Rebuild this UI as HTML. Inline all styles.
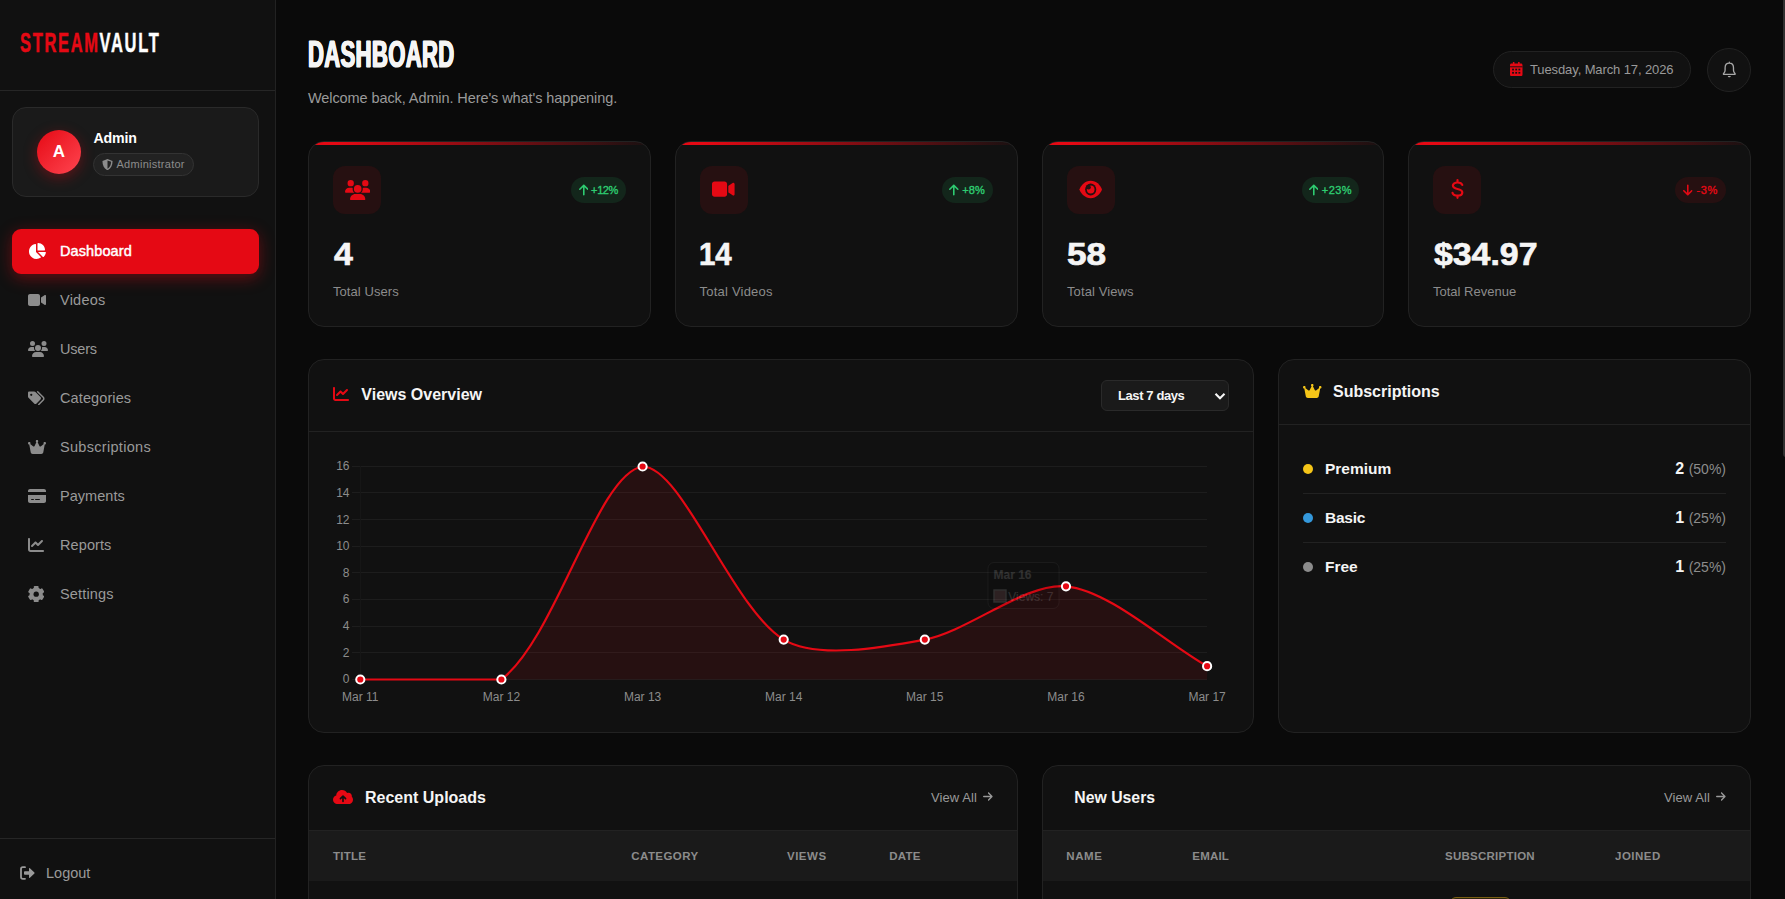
<!DOCTYPE html>
<html lang="en">
<head>
<meta charset="utf-8">
<title>StreamVault Admin - Dashboard</title>
<style>
*{box-sizing:border-box;margin:0;padding:0}
html,body{width:1785px;height:899px;overflow:hidden;background:#0a0a0a;color:#f5f5f5;font-family:"Liberation Sans",Arial,sans-serif;}
body{position:relative}
svg{display:block}
.abs{position:absolute}
/* ---------- sidebar ---------- */
#sidebar{position:absolute;left:0;top:0;width:276px;height:899px;background:#111111;border-right:1px solid #222222}
#logo{position:absolute;left:20px;top:25.5px;height:32px;line-height:32px;font-weight:700;font-size:28.5px;white-space:nowrap;transform-origin:0 50%;transform:scaleX(.578);letter-spacing:2.9px;color:#fff;-webkit-text-stroke:.5px #fff}
#logo b{color:#e50914;font-weight:700;-webkit-text-stroke:.5px #e50914}
.hdiv{position:absolute;left:0;width:275px;height:1px;background:#262626}
#usercard{position:absolute;left:12px;top:107px;width:247px;height:90px;border-radius:14px;background:#1a1a1a;border:1px solid #2a2a2a}
#avatar{position:absolute;left:24px;top:22px;width:44px;height:44px;border-radius:50%;background:linear-gradient(135deg,#e50914,#ff4550);box-shadow:0 4px 14px rgba(229,9,20,.35);color:#fff;font-weight:700;font-size:17px;line-height:44px;text-align:center}
#uname{position:absolute;left:80.5px;top:21px;font-weight:700;font-size:14.2px;line-height:18px;color:#fff;letter-spacing:-.2px}
#urole{position:absolute;left:80px;top:45px;width:101px;height:23px;border-radius:12px;background:#222;border:1px solid #333;color:#8c8c8c;font-size:11px;line-height:21px;padding-left:22.5px;white-space:nowrap;letter-spacing:.27px}
#urole svg{position:absolute;left:8px;top:4.5px}
.nav{position:absolute;left:12px;width:247px;height:45px;border-radius:9px;color:#9a9a9a;font-size:14.5px;line-height:45px;padding-left:48px;white-space:nowrap}
.nav svg{position:absolute}
.nav.on{background:#e50914;color:#fff;font-weight:400;-webkit-text-stroke:.45px #fff;box-shadow:0 4px 16px rgba(229,9,20,.4);font-size:14.500px;letter-spacing:.1px}
#logout{position:absolute;left:46px;top:864px;font-size:14.5px;line-height:18px;color:#9a9a9a}
/* ---------- main header ---------- */
#title{position:absolute;left:308px;top:34.7px;height:38px;line-height:38px;font-weight:700;font-size:37.5px;white-space:nowrap;transform-origin:0 50%;transform:scaleX(.588);color:#f5f5f5;letter-spacing:.6px;-webkit-text-stroke:1.1px #f5f5f5;text-shadow:.9px 0 0 #f5f5f5,-.9px 0 0 #f5f5f5}
#sub{position:absolute;left:308px;top:89px;font-size:14.5px;line-height:18px;color:#9a9a9a;white-space:nowrap;letter-spacing:-.09px}
#date{position:absolute;left:1493px;top:51px;width:198px;height:37px;border-radius:19px;background:#111;border:1px solid #222;color:#9a9a9a;font-size:13px;line-height:35px;padding-left:36px;white-space:nowrap;letter-spacing:-.11px}
#date svg{position:absolute;left:16.400px;top:10px}
#bell{position:absolute;left:1707px;top:48px;width:44px;height:44px;border-radius:50%;background:#111;border:1px solid #222}
#bell svg{position:absolute;left:14.200px;top:12.400px}
/* ---------- cards ---------- */
.card{position:absolute;background:#111111;border:1px solid #222222;border-radius:16px;overflow:hidden}
.stat{top:141px;width:343px;height:186px}
.stat:before{content:"";position:absolute;left:0;top:0;right:0;height:3px;background:linear-gradient(90deg,#e50914 0%,#e50914 8%,rgba(229,9,20,.03) 100%)}
.sicon{position:absolute;left:24px;top:24px;width:48px;height:48px;border-radius:12px;background:#261011}
.sicon svg{position:absolute}
.chg{position:absolute;top:35px;right:24px;height:26px;border-radius:13px;font-size:11px;font-weight:400;-webkit-text-stroke:.35px;line-height:26px;padding:0 8px 0 19.900px;white-space:nowrap}
.chg.up{background:#13261b;color:#2ecc71}
.chg.dn{background:#261011;color:#e50914}
.chg svg{position:absolute;left:7.400px;top:7px}
.sval{position:absolute;left:24px;top:93px;font-size:32px;line-height:38px;font-weight:700;color:#f5f5f5;white-space:nowrap;transform-origin:0 50%;-webkit-text-stroke:.7px #f5f5f5}
.slab{position:absolute;left:24px;top:142px;font-size:13px;line-height:16px;color:#8c8c8c;white-space:nowrap}
.ctitle{position:absolute;font-weight:700;font-size:16px;line-height:20px;color:#f5f5f5;white-space:nowrap}
.cline{position:absolute;left:0;right:0;height:1px;background:#222}
.viewall{position:absolute;font-size:13px;line-height:16px;color:#9a9a9a;white-space:nowrap;letter-spacing:.1px}
.thead{position:absolute;left:0;right:0;top:65px;height:50px;background:#1a1a1a}
.th{position:absolute;top:18px;font-size:11.5px;line-height:14px;font-weight:700;color:#8c8c8c;letter-spacing:.5px;white-space:nowrap}
.srow{position:absolute;left:24px;right:24px;height:49px}
.srow .dot{position:absolute;left:0;top:19px;width:10px;height:10px;border-radius:50%}
.srow .nm{position:absolute;left:22px;top:13.500px;font-size:15.500px;line-height:20px;font-weight:700;color:#f5f5f5}
.srow .ct{position:absolute;right:0;top:13.500px;font-size:16px;line-height:20px;font-weight:700;color:#f5f5f5;white-space:nowrap}
.srow .ct i{font-style:normal;font-weight:400;font-size:14px;color:#8c8c8c}
.srow.bb{border-bottom:1px solid #222}
#sel{position:absolute;left:792px;top:20px;width:128px;height:31px;border-radius:6px;background:#1a1a1a;border:1px solid #2a2a2a;color:#f5f5f5;font-weight:700;font-size:13px;line-height:29px;padding-left:16px;white-space:nowrap;letter-spacing:-.4px}
#sel svg{position:absolute;right:2.500px;top:9.500px}
#scroll{position:absolute;left:1782.700px;top:0;width:3px;height:457px;background:#303030;border-radius:0 0 0 3px}
</style>
</head>
<body>
<!-- SIDEBAR -->
<div id="sidebar">
  <div id="logo"><b>STREAM</b>VAULT</div>
  <div class="hdiv" style="top:90px"></div>
  <div id="usercard">
    <div id="avatar">A</div>
    <div id="uname">Admin</div>
    <div id="urole"><svg width="11" height="11.500" viewBox="0 0 10 11" preserveAspectRatio="none"><path d="M5 0L9.6 1.8C9.6 6.2 8 9.2 5 10.8C2 9.2.4 6.200.4 1.800Z" fill="#8c8c8c"/><path d="M5 1.500V9.300C7.100 8 8.200 5.800 8.300 2.700Z" fill="#222"/></svg>Administrator</div>
  </div>
  <div class="nav on" style="top:229px"><svg style="left:16px;top:14px" width="18" height="16" viewBox="0 0 576 512"><path d="M304 240V16.600c0-9 7-16.600 16-16.600C443.700 0 544 100.300 544 224c0 9-7.600 16-16.600 16H304zM32 272C32 150.700 122.100 50.300 239 34.300c9.200-1.300 17 6.100 17 15.400V288L412.500 444.500c6.700 6.700 6.200 17.700-1.500 23.100C371.800 495.600 323.800 512 272 512C139.500 512 32 404.600 32 272zm526.400 16c9.300 0 16.600 7.800 15.400 17c-7.700 55.900-34.600 105.600-73.900 142.300c-6 5.600-15.400 5.200-21.200-.7L320 288H558.400z" fill="#fff"/></svg>Dashboard</div>
  <div class="nav" style="top:278px;letter-spacing:0.23px"><svg style="left:16px;top:14px" width="18" height="16" viewBox="0 0 576 512"><path d="M0 128C0 92.700 28.700 64 64 64H320c35.300 0 64 28.700 64 64V384c0 35.300-28.700 64-64 64H64c-35.300 0-64-28.700-64-64V128zM559.100 99.800c10.400 5.600 16.900 16.400 16.900 28.200V384c0 11.800-6.500 22.600-16.900 28.200s-23 5-32.900-1.600l-96-64L416 337.100V320 192 174.900l14.200-9.500 96-64c9.800-6.500 22.400-7.200 32.900-1.600z" fill="#8c8c8c"/></svg>Videos</div>
  <div class="nav" style="top:327px;letter-spacing:-0.22px"><svg style="left:16px;top:14px" width="20" height="16" viewBox="0 0 640 512"><path d="M144 0a80 80 0 1 1 0 160A80 80 0 1 1 144 0zM512 0a80 80 0 1 1 0 160A80 80 0 1 1 512 0zM0 298.700C0 239.800 47.800 192 106.700 192h42.700c15.900 0 31 3.500 44.600 9.700c-1.300 7.200-1.900 14.700-1.900 22.300c0 38.200 16.800 72.500 43.300 96c-.2 0-.4 0-.7 0H21.300C9.600 320 0 310.400 0 298.700zM405.300 320c-.2 0-.4 0-.7 0c26.600-23.500 43.300-57.800 43.300-96c0-7.600-.7-15-1.900-22.300c13.600-6.300 28.700-9.700 44.600-9.700h42.700C592.200 192 640 239.800 640 298.700c0 11.800-9.600 21.300-21.300 21.300H405.300zM224 224a96 96 0 1 1 192 0 96 96 0 1 1 -192 0zM128 485.300C128 411.700 187.700 352 261.300 352H378.700C452.300 352 512 411.700 512 485.300c0 14.700-11.900 26.700-26.700 26.700H154.700c-14.700 0-26.700-11.900-26.700-26.700z" fill="#8c8c8c"/></svg>Users</div>
  <div class="nav" style="top:376px;letter-spacing:0.11px"><svg style="left:16px;top:14.700px" width="16.600" height="14.400" viewBox="0 0.300 19.400 17" preserveAspectRatio="none"><path d="M0 2.500C0 1.600.7 1 1.500 1H7.200C7.800 1 8.300 1.200 8.700 1.600L14.600 7.500C15.400 8.300 15.400 9.500 14.600 10.300L10 15C9.200 15.800 8 15.800 7.200 15L.6 8.400C.2 8 0 7.500 0 6.900Z" fill="#8c8c8c"/><circle cx="3.800" cy="4.800" r="1.300" fill="#111"/><path d="M11.300 1.300L17.800 7.800C18.700 8.700 18.700 10 17.800 10.900L12.600 16.200" stroke="#8c8c8c" stroke-width="1.700" fill="none" stroke-linecap="round"/></svg>Categories</div>
  <div class="nav" style="top:425px;letter-spacing:0.3px"><svg style="left:16px;top:14px" width="18" height="16" viewBox="0 0 576 512"><path d="M309 106c11.400-7 19-19.700 19-34c0-22.100-17.900-40-40-40s-40 17.900-40 40c0 14.400 7.600 27 19 34L209.700 220.600c-9.100 18.200-32.700 23.400-48.600 10.700L72 160c5-6.700 8-15 8-24c0-22.100-17.900-40-40-40S0 113.900 0 136s17.900 40 40 40c.2 0 .5 0 .7 0L86.400 427.400c5.500 30.400 32 52.600 63 52.600H426.600c30.900 0 57.400-22.100 63-52.600L535.300 176c.2 0 .5 0 .7 0c22.100 0 40-17.900 40-40s-17.900-40-40-40s-40 17.900-40 40c0 9 3 17.300 8 24l-89.100 71.300c-15.900 12.700-39.500 7.500-48.600-10.700L309 106z" fill="#8c8c8c"/></svg>Subscriptions</div>
  <div class="nav" style="top:474px;letter-spacing:0.04px"><svg style="left:16px;top:14px" width="18" height="16" viewBox="0 0 576 512"><path d="M64 32C28.700 32 0 60.700 0 96v32H576V96c0-35.300-28.700-64-64-64H64zM576 224H0V416c0 35.300 28.700 64 64 64H512c35.300 0 64-28.700 64-64V224zM112 352h64c8.800 0 16 7.200 16 16s-7.200 16-16 16H112c-8.800 0-16-7.200-16-16s7.200-16 16-16zm112 16c0-8.800 7.200-16 16-16H368c8.800 0 16 7.200 16 16s-7.200 16-16 16H240c-8.800 0-16-7.200-16-16z" fill="#8c8c8c"/></svg>Payments</div>
  <div class="nav" style="top:523px;letter-spacing:0.1px"><svg style="left:16px;top:14px" width="16" height="16" viewBox="0 0 512 512"><path d="M64 64c0-17.700-14.300-32-32-32S0 46.300 0 64V400c0 44.200 35.800 80 80 80H480c17.700 0 32-14.300 32-32s-14.300-32-32-32H80c-8.800 0-16-7.200-16-16V64zm406.600 86.600c12.500-12.500 12.500-32.800 0-45.300s-32.800-12.500-45.300 0L320 210.700l-57.400-57.400c-12.500-12.500-32.800-12.500-45.300 0l-112 112c-12.500 12.500-12.500 32.800 0 45.300s32.800 12.500 45.300 0L240 221.300l57.400 57.400c12.500 12.500 32.800 12.500 45.300 0l128-128z" fill="#8c8c8c"/></svg>Reports</div>
  <div class="nav" style="top:572px;letter-spacing:0.17px"><svg style="left:16px;top:13.800px" width="16.400" height="16.400" viewBox="0.400 0.400 17.200 17.200"><g transform="translate(9 9)"><g fill="#8c8c8c"><circle r="6.900"/><rect x="-2.500" y="-8.600" width="5" height="17.200" rx=".9"/><rect x="-2.500" y="-8.600" width="5" height="17.200" rx=".9" transform="rotate(60)"/><rect x="-2.500" y="-8.600" width="5" height="17.200" rx=".9" transform="rotate(120)"/></g><circle r="2.800" fill="#111"/></g></svg>Settings</div>
  <div class="hdiv" style="top:838px"></div>
  <svg class="abs" style="left:20px;top:866px" width="15" height="14" viewBox="0 0 15 14"><path d="M5 1.200H2.800C1.800 1.200 1 2 1 3V11C1 12 1.800 12.800 2.800 12.800H5" stroke="#9a9a9a" stroke-width="1.800" fill="none" stroke-linecap="round"/><path d="M4.800 5.300H9V2.600C9 2.100 9.500 1.900 9.900 2.200L14.400 6.400C14.700 6.700 14.700 7.300 14.400 7.600L9.900 11.800C9.500 12.100 9 11.900 9 11.400V8.700H4.800C4.400 8.700 4 8.300 4 7.900V6.100C4 5.700 4.400 5.300 4.800 5.300Z" fill="#9a9a9a"/></svg>
  <div id="logout">Logout</div>
</div>

<!-- HEADER -->
<div id="title">DASHBOARD</div>
<div id="sub">Welcome back, Admin. Here's what's happening.</div>
<div id="date"><svg width="12.500" height="14.200" viewBox="0 0 13 14" preserveAspectRatio="none"><path d="M3 0H4.600V1.600H8.400V0H10V1.600H11.500C12.300 1.600 13 2.300 13 3.100V12.500C13 13.300 12.300 14 11.500 14H1.500C.7 14 0 13.300 0 12.500V3.100C0 2.300.7 1.600 1.500 1.600H3Z" fill="#e50914"/><g fill="#111"><rect x="0" y="4.300" width="13" height=".9"/><rect x="2.200" y="6.600" width="1.900" height="1.700"/><rect x="5.500" y="6.600" width="1.900" height="1.700"/><rect x="8.800" y="6.600" width="1.900" height="1.700"/><rect x="2.200" y="9.800" width="1.900" height="1.700"/><rect x="5.500" y="9.800" width="1.900" height="1.700"/><rect x="8.800" y="9.800" width="1.900" height="1.700"/></g></svg>Tuesday, March 17, 2026</div>
<div id="bell"><svg width="14.600" height="17.400" viewBox="0 0 16 18" preserveAspectRatio="none"><path d="M8 1.200V2.200M8 2.200C5.200 2.200 3.400 4.300 3.400 7V9.500C3.400 11 2.700 12.200 1.600 13.200V13.800H14.400V13.200C13.300 12.200 12.600 11 12.600 9.500V7C12.600 4.300 10.800 2.200 8 2.200Z" stroke="#a8a8a8" stroke-width="1.450" fill="none" stroke-linejoin="round" stroke-linecap="round"/><path d="M6.300 15.400C6.500 16.300 7.200 16.800 8 16.800C8.800 16.800 9.500 16.300 9.700 15.400Z" fill="#a8a8a8"/></svg></div>

<!-- STAT CARDS -->
<div class="card stat" style="left:308px">
  <div class="sicon"><svg style="left:11.500px;top:13.800px" width="25.400" height="20.400" viewBox="0 0 640 512" preserveAspectRatio="none"><path d="M144 0a80 80 0 1 1 0 160A80 80 0 1 1 144 0zM512 0a80 80 0 1 1 0 160A80 80 0 1 1 512 0zM0 298.700C0 239.800 47.800 192 106.700 192h42.700c15.900 0 31 3.500 44.600 9.700c-1.300 7.200-1.900 14.700-1.900 22.300c0 38.200 16.800 72.500 43.300 96c-.2 0-.4 0-.7 0H21.300C9.600 320 0 310.400 0 298.700zM405.300 320c-.2 0-.4 0-.7 0c26.600-23.500 43.300-57.800 43.300-96c0-7.600-.7-15-1.900-22.300c13.600-6.300 28.700-9.700 44.600-9.700h42.700C592.200 192 640 239.800 640 298.700c0 11.800-9.600 21.300-21.300 21.300H405.300zM224 224a96 96 0 1 1 192 0 96 96 0 1 1 -192 0zM128 485.300C128 411.700 187.700 352 261.300 352H378.700C452.300 352 512 411.700 512 485.300c0 14.700-11.900 26.700-26.700 26.700H154.700c-14.700 0-26.700-11.900-26.700-26.700z" fill="#e50914"/></svg></div>
  <div class="chg up"><svg width="9.600" height="12" viewBox="0 10 384 492" preserveAspectRatio="none"><path d="M214.600 41.400c-12.500-12.500-32.800-12.500-45.300 0l-160 160c-12.500 12.500-12.500 32.800 0 45.300s32.800 12.500 45.300 0L160 141.300V448c0 17.700 14.300 32 32 32s32-14.300 32-32V141.300L329.400 246.600c12.500 12.500 32.800 12.500 45.300 0s12.500-32.800 0-45.300l-160-160z" fill="#2ecc71"/></svg><span style="letter-spacing:-.39px">+12%</span></div>
  <div class="sval" style="transform:scaleX(1.06);left:25px">4</div>
  <div class="slab" style="letter-spacing:.07px">Total Users</div>
</div>
<div class="card stat" style="left:675px">
  <div class="sicon"><svg style="left:12.200px;top:13px" width="22.600" height="20.400" viewBox="0 0 576 512" preserveAspectRatio="none"><path d="M0 128C0 92.700 28.700 64 64 64H320c35.300 0 64 28.700 64 64V384c0 35.300-28.700 64-64 64H64c-35.300 0-64-28.700-64-64V128zM559.100 99.800c10.400 5.600 16.900 16.400 16.900 28.200V384c0 11.800-6.500 22.600-16.900 28.200s-23 5-32.900-1.600l-96-64L416 337.100V320 192 174.900l14.200-9.500 96-64c9.800-6.500 22.400-7.200 32.900-1.600z" fill="#e50914"/></svg></div>
  <div class="chg up" style="padding-left:20.8px;padding-right:8px"><svg style="left:7.8px" width="9.600" height="12" viewBox="0 10 384 492" preserveAspectRatio="none"><path d="M214.600 41.400c-12.500-12.500-32.800-12.500-45.300 0l-160 160c-12.500 12.500-12.500 32.800 0 45.300s32.800 12.500 45.300 0L160 141.300V448c0 17.700 14.300 32 32 32s32-14.300 32-32V141.300L329.400 246.600c12.500 12.500 32.800 12.500 45.300 0s12.500-32.800 0-45.300l-160-160z" fill="#2ecc71"/></svg><span style="letter-spacing:.12px">+8%</span></div>
  <div class="sval" style="transform:scaleX(.92);left:23px">14</div>
  <div class="slab" style="letter-spacing:.22px;left:23.500px">Total Videos</div>
</div>
<div class="card stat" style="left:1042px;width:342px">
  <div class="sicon"><svg style="left:11.500px;top:14.200px" width="23.400" height="19" viewBox="0 0 24 18" preserveAspectRatio="none"><path d="M12 .8C6.300 .8 2.200 4.700.4 9C2.200 13.300 6.300 17.200 12 17.200C17.700 17.200 21.800 13.300 23.600 9C21.800 4.700 17.700 .8 12 .8Z" fill="#e50914"/><circle cx="12" cy="9" r="5.700" fill="#261011"/><circle cx="12" cy="9" r="3.900" fill="#e50914"/><circle cx="9.800" cy="6.800" r="2.300" fill="#261011"/></svg></div>
  <div class="chg up" style="padding-left:20.3px;padding-right:7.2px"><svg style="left:7.1px" width="9.600" height="12" viewBox="0 10 384 492" preserveAspectRatio="none"><path d="M214.600 41.400c-12.500-12.500-32.800-12.500-45.300 0l-160 160c-12.500 12.500-12.500 32.800 0 45.300s32.800 12.500 45.300 0L160 141.300V448c0 17.700 14.300 32 32 32s32-14.300 32-32V141.300L329.400 246.600c12.500 12.500 32.800 12.500 45.300 0s12.500-32.800 0-45.300l-160-160z" fill="#2ecc71"/></svg><span style="letter-spacing:.39px">+23%</span></div>
  <div class="sval" style="transform:scaleX(1.1)">58</div>
  <div class="slab" style="letter-spacing:.1px">Total Views</div>
</div>
<div class="card stat" style="left:1408px">
  <div class="sicon"><svg style="left:17.500px;top:13.300px" width="13" height="20" viewBox="0 0 13 21" preserveAspectRatio="none"><path d="M11.300 6.300C10.800 4.500 9 3.600 6.500 3.600C3.800 3.600 1.900 4.900 1.900 6.900C1.900 9.100 3.700 9.800 6.500 10.400C9.500 11.100 11.300 11.900 11.300 14.100C11.300 16.200 9.300 17.400 6.500 17.400C3.700 17.400 1.900 16.300 1.500 14.400M6.500 1.200V3.600M6.500 17.400V19.800" stroke="#e50914" stroke-width="2.200" fill="none" stroke-linecap="round"/></svg></div>
  <div class="chg dn" style="padding-left:21.100px"><svg width="9.600" height="12" viewBox="0 10 384 492" preserveAspectRatio="none" style="transform:rotate(180deg);left:7.600px"><path d="M214.600 41.400c-12.500-12.500-32.800-12.500-45.300 0l-160 160c-12.500 12.500-12.500 32.800 0 45.300s32.800 12.500 45.300 0L160 141.300V448c0 17.700 14.300 32 32 32s32-14.300 32-32V141.300L329.400 246.600c12.500 12.500 32.800 12.500 45.300 0s12.500-32.800 0-45.300l-160-160z" fill="#e50914"/></svg><span style="letter-spacing:.68px">-3%</span></div>
  <div class="sval" style="transform:scaleX(1.057);left:24.500px">$34.97</div>
  <div class="slab">Total Revenue</div>
</div>

<!-- CHART CARD -->
<div class="card" id="chartcard" style="left:308px;top:359px;width:946px;height:374px">
  <svg class="abs" style="left:24px;top:25.800px" width="16" height="16" viewBox="0 0 512 512"><path d="M64 64c0-17.700-14.300-32-32-32S0 46.300 0 64V400c0 44.200 35.800 80 80 80H480c17.700 0 32-14.300 32-32s-14.300-32-32-32H80c-8.800 0-16-7.200-16-16V64zm406.600 86.600c12.500-12.500 12.500-32.800 0-45.300s-32.800-12.500-45.300 0L320 210.700l-57.400-57.400c-12.500-12.500-32.800-12.500-45.300 0l-112 112c-12.500 12.500-12.500 32.800 0 45.300s32.800 12.500 45.300 0L240 221.300l57.400 57.400c12.500 12.500 32.800 12.500 45.300 0l128-128z" fill="#e50914"/></svg>
  <div class="ctitle" style="left:52.300px;top:25px">Views Overview</div>
  <div id="sel">Last 7 days<svg width="12" height="10" viewBox="0 0 12 10"><path d="M1.500 2.800L6 7.300L10.500 2.800" stroke="#f5f5f5" stroke-width="2.100" fill="none"/></svg></div>
  <div class="cline" style="top:71px"></div>
  <svg class="abs" id="chart" style="left:0;top:0" width="944" height="372" viewBox="309 360 944 372" font-family="Liberation Sans, Arial, sans-serif">
    <path d="M352 679.5H1207.1" stroke="#1d1d1d" stroke-width="1"/>
    <path d="M352 652.5H1207.1" stroke="#1d1d1d" stroke-width="1"/>
    <path d="M352 626.5H1207.1" stroke="#1d1d1d" stroke-width="1"/>
    <path d="M352 599.5H1207.1" stroke="#1d1d1d" stroke-width="1"/>
    <path d="M352 572.5H1207.1" stroke="#1d1d1d" stroke-width="1"/>
    <path d="M352 546.5H1207.1" stroke="#1d1d1d" stroke-width="1"/>
    <path d="M352 519.5H1207.1" stroke="#1d1d1d" stroke-width="1"/>
    <path d="M352 492.5H1207.1" stroke="#1d1d1d" stroke-width="1"/>
    <path d="M352 466.5H1207.1" stroke="#1d1d1d" stroke-width="1"/>
    <path d="M360.5 466V679" stroke="#161616" stroke-width="1"/>
    <path d="M360.3 679.5 C402.6 679.5 471.3 679.5 501.4 679.5 C556.0 638.3 597.4 472.9 642.6 466.5 C682.1 466.5 731.8 607.7 783.7 639.6 C816.5 659.7 883.9 647.3 924.8 639.6 C968.6 631.3 1025.1 582.5 1066.0 586.3 C1109.8 590.5 1164.7 642.2 1207.1 666.2 L1207.1 679.5 L360.3 679.5 Z" fill="rgba(229,9,20,0.1)"/>
    <path d="M360.3 679.5 C402.6 679.5 471.3 679.5 501.4 679.5 C556.0 638.3 597.4 472.9 642.6 466.5 C682.1 466.5 731.8 607.7 783.7 639.6 C816.5 659.7 883.9 647.3 924.8 639.6 C968.6 631.3 1025.1 582.5 1066.0 586.3 C1109.8 590.5 1164.7 642.2 1207.1 666.2" fill="none" stroke="#e50914" stroke-width="2.2"/>
    <circle cx="360.3" cy="679.5" r="4.100" fill="#e50914" stroke="#fff" stroke-width="2"/>
    <circle cx="501.4" cy="679.5" r="4.100" fill="#e50914" stroke="#fff" stroke-width="2"/>
    <circle cx="642.6" cy="466.5" r="4.100" fill="#e50914" stroke="#fff" stroke-width="2"/>
    <circle cx="783.7" cy="639.6" r="4.100" fill="#e50914" stroke="#fff" stroke-width="2"/>
    <circle cx="924.8" cy="639.6" r="4.100" fill="#e50914" stroke="#fff" stroke-width="2"/>
    <circle cx="1066.0" cy="586.3" r="4.100" fill="#e50914" stroke="#fff" stroke-width="2"/>
    <circle cx="1207.1" cy="666.2" r="4.100" fill="#e50914" stroke="#fff" stroke-width="2"/>
    <g fill="#8c8c8c" font-size="12" text-anchor="end">
    <text x="349.500" y="683.3">0</text>
    <text x="349.500" y="656.7">2</text>
    <text x="349.500" y="630.0">4</text>
    <text x="349.500" y="603.4">6</text>
    <text x="349.500" y="576.8">8</text>
    <text x="349.500" y="550.2">10</text>
    <text x="349.500" y="523.5">12</text>
    <text x="349.500" y="496.9">14</text>
    <text x="349.500" y="470.3">16</text>
    </g>
    <g fill="#8c8c8c" font-size="12" text-anchor="middle">
    <text x="360.3" y="701">Mar 11</text>
    <text x="501.4" y="701">Mar 12</text>
    <text x="642.6" y="701">Mar 13</text>
    <text x="783.7" y="701">Mar 14</text>
    <text x="924.8" y="701">Mar 15</text>
    <text x="1066.0" y="701">Mar 16</text>
    <text x="1207.1" y="701">Mar 17</text>
    </g>
    <g opacity=".125"><rect x="988" y="562.500" width="71" height="46" rx="6" fill="#000" fill-opacity=".8" stroke="#fff" stroke-opacity=".35"/><text x="993.500" y="579" font-size="12" font-weight="700" fill="#fff">Mar 16</text><rect x="994" y="590" width="12" height="12" fill="#f08f95" stroke="#fff" stroke-width="1.400"/><text x="1008.300" y="600.500" font-size="12" fill="#fff">Views: 7</text></g>
  </svg>
</div>

<!-- SUBSCRIPTIONS CARD -->
<div class="card" style="left:1278px;top:359px;width:473px;height:374px">
  <svg class="abs" style="left:24px;top:23.200px" width="18.500" height="16" viewBox="0 0 576 512" preserveAspectRatio="none"><path d="M309 106c11.400-7 19-19.700 19-34c0-22.100-17.900-40-40-40s-40 17.900-40 40c0 14.400 7.600 27 19 34L209.700 220.600c-9.100 18.200-32.700 23.400-48.600 10.700L72 160c5-6.700 8-15 8-24c0-22.100-17.900-40-40-40S0 113.900 0 136s17.900 40 40 40c.2 0 .5 0 .7 0L86.400 427.400c5.500 30.400 32 52.600 63 52.600H426.600c30.900 0 57.400-22.100 63-52.600L535.300 176c.2 0 .5 0 .7 0c22.100 0 40-17.900 40-40s-17.900-40-40-40s-40 17.900-40 40c0 9 3 17.300 8 24l-89.100 71.300c-15.900 12.700-39.500 7.500-48.600-10.700L309 106z" fill="#f5c518"/></svg>
  <div class="ctitle" style="left:54px;top:22px">Subscriptions</div>
  <div class="cline" style="top:64px"></div>
  <div class="srow bb" style="top:85px"><span class="dot" style="background:#f5c518"></span><span class="nm">Premium</span><span class="ct">2 <i>(50%)</i></span></div>
  <div class="srow bb" style="top:134px"><span class="dot" style="background:#3498db"></span><span class="nm" style="letter-spacing:-.25px">Basic</span><span class="ct">1 <i>(25%)</i></span></div>
  <div class="srow" style="top:183px"><span class="dot" style="background:#8c8c8c"></span><span class="nm">Free</span><span class="ct">1 <i>(25%)</i></span></div>
</div>

<!-- RECENT UPLOADS -->
<div class="card" style="left:308px;top:765px;width:710px;height:200px">
  <svg class="abs" style="left:24px;top:24px" width="20" height="14.300" viewBox="0 0 21 15.200" preserveAspectRatio="none"><path d="M5 15C2.200 15 0 12.900 0 10.300C0 8.200 1.400 6.400 3.400 5.800C3.600 2.600 6.200 0 9.500 0C11.800 0 13.800 1.300 14.800 3.200C15.300 3 15.800 2.900 16.300 2.900C18.300 2.900 19.800 4.500 19.800 6.400C19.800 6.700 19.800 7 19.700 7.300C20.500 8.100 21 9.200 21 10.400C21 13 18.900 15 16.400 15Z" fill="#e50914"/><path d="M10.500 12.200V6.800M7.800 9.200L10.500 6.500L13.200 9.200" stroke="#111" stroke-width="1.700" fill="none" stroke-linecap="round" stroke-linejoin="round"/></svg>
  <div class="ctitle" style="left:56px;top:22px">Recent Uploads</div>
  <div class="viewall" style="left:622px;top:24px">View All</div>
  <svg class="abs" style="left:674.3px;top:25.400px" width="9.700" height="11" viewBox="0 0 448 512"><path d="M438.600 278.600c12.500-12.500 12.500-32.800 0-45.300l-160-160c-12.500-12.500-32.800-12.500-45.300 0s-12.500 32.800 0 45.300L338.800 224 32 224c-17.700 0-32 14.300-32 32s14.300 32 32 32l306.700 0L233.400 393.400c-12.500 12.500-12.500 32.800 0 45.300s32.800 12.500 45.300 0l160-160z" fill="#9a9a9a"/></svg>
  <div class="cline" style="top:64px"></div>
  <div class="thead">
    <div class="th" style="left:24px;letter-spacing:.25px">TITLE</div>
    <div class="th" style="left:322.300px;letter-spacing:.42px">CATEGORY</div>
    <div class="th" style="left:478px">VIEWS</div>
    <div class="th" style="left:580.300px;letter-spacing:.25px">DATE</div>
  </div>
</div>

<!-- NEW USERS -->
<div class="card" style="left:1042px;top:765px;width:709px;height:200px">
  <div class="ctitle" style="left:31.300px;top:22px;font-size:15.800px">New Users</div>
  <div class="viewall" style="left:621px;top:24px">View All</div>
  <svg class="abs" style="left:673.3px;top:25.400px" width="9.700" height="11" viewBox="0 0 448 512"><path d="M438.600 278.600c12.500-12.500 12.500-32.800 0-45.300l-160-160c-12.500-12.500-32.800-12.500-45.300 0s-12.500 32.800 0 45.300L338.800 224 32 224c-17.700 0-32 14.300-32 32s14.300 32 32 32l306.700 0L233.400 393.400c-12.500 12.500-12.500 32.800 0 45.300s32.800 12.500 45.300 0l160-160z" fill="#9a9a9a"/></svg>
  <div class="cline" style="top:64px"></div>
  <div class="thead">
    <div class="th" style="left:23.300px;letter-spacing:.6px">NAME</div>
    <div class="th" style="left:149.300px;letter-spacing:.2px">EMAIL</div>
    <div class="th" style="left:402px;letter-spacing:.25px">SUBSCRIPTION</div>
    <div class="th" style="left:572px">JOINED</div>
  </div>
  <div class="abs" style="left:407px;top:131px;width:61px;height:24px;border-radius:6px;border:1px solid #7a5f14;background:#2a240c"></div>
</div>

<div id="scroll"></div>
</body>
</html>
